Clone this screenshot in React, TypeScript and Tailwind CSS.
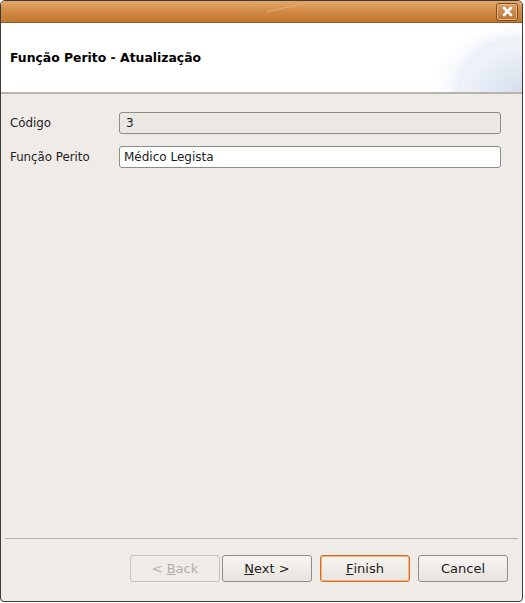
import React from "react";

const font = { fontFamily: '"DejaVu Sans", "Liberation Sans", sans-serif' };

function Btn({ children, disabled, focused }: { children: React.ReactNode; disabled?: boolean; focused?: boolean }) {
  return (
    <div
      className={
        "w-[90px] h-[27px] flex items-center justify-center rounded-[3px] border text-[13px] " +
        (disabled
          ? "border-[#c7c2bc] bg-[#efebe7] text-[#b3afa9]"
          : focused
          ? "border-[#d86b25] bg-gradient-to-b from-[#f6f4f2] to-[#e8e4df] text-[#1c1c1c] shadow-[inset_0_0_0_1px_#f3b27c]"
          : "border-[#8f8b86] bg-gradient-to-b from-[#f6f4f2] to-[#e8e4df] text-[#1c1c1c]")
      }
    >
      {children}
    </div>
  );
}

export default function App() {
  return (
    <div className="w-[525px] h-[603px] bg-white" style={font}>
      <div className="w-[523px] h-[602px] flex flex-col border border-[#3e3a35] rounded-t-[5px] rounded-b-[4px] overflow-hidden bg-[#efebe7]">
        {/* Title bar */}
        <div className="h-[22px] shrink-0 relative flex items-center justify-end pr-[4px] bg-gradient-to-b from-[#e3a868] via-[#d08a45] to-[#c2782f] border-b border-[#8a5a28]">
          <div className="absolute left-[265px] top-[6px] w-[40px] h-[1px] bg-[#e8b983] -rotate-[12deg] opacity-70" />
          <div className="w-[22px] h-[18px] rounded-[3px] border border-[#7a4c1e] bg-gradient-to-b from-[#dca066] to-[#b87232] flex items-center justify-center shadow-[inset_0_0_0_1px_#e9b883]">
            <svg width="11" height="11" viewBox="0 0 11 11">
              <path d="M2 2 L9 9 M9 2 L2 9" stroke="#ffffff" strokeWidth="2.6" strokeLinecap="round" />
            </svg>
          </div>
        </div>
        {/* Header */}
        <div className="h-[71px] shrink-0 relative bg-white border-b-2 border-[#b7b3ae] flex items-center pl-[9px] pt-[2px] overflow-hidden">
          <div className="absolute right-0 top-0 w-[110px] h-full bg-[radial-gradient(ellipse_90px_70px_at_100%_100%,#d5dfec_0%,#e6ecf5_45%,rgba(255,255,255,0)_100%)]" />
          <div className="absolute right-[-50px] top-[10px] w-[120px] h-[120px] rounded-full bg-[radial-gradient(circle,rgba(255,255,255,0)_55%,rgba(230,236,245,0.5)_62%,rgba(255,255,255,0)_72%)]" />
          <span className="relative text-[12.4px] font-bold text-black">Função Perito - Atualização</span>
        </div>
        {/* Body */}
        <div className="flex-1 flex flex-col pt-[18px] px-[9px] gap-[12px] text-[11.8px] text-[#1c1c1c]">
          <div className="flex items-center">
            <span className="w-[109px] pt-[2px]">Código</span>
            <div className="w-[382px] h-[22px] rounded-[3px] border border-[#8e8a85] bg-[#ebe7e3] flex items-center px-[6px] text-[12px]">3</div>
          </div>
          <div className="flex items-center">
            <span className="w-[109px] pt-[2px]">Função Perito</span>
            <div className="w-[382px] h-[22px] rounded-[3px] border border-[#8e8a85] bg-white flex items-center px-[4px] text-[12px]">Médico Legista</div>
          </div>
        </div>
        {/* Footer */}
        <div className="shrink-0 mx-[4px] border-t border-[#b2aea9]" />
        <div className="shrink-0 h-[62px] flex items-start pt-[16px] pl-[129px]">
          <div className="flex">
            <Btn disabled>&lt; <span className="underline ml-[4px]">B</span>ack</Btn>
            <div className="ml-[2px]"><Btn><span className="underline">N</span>ext &gt;</Btn></div>
            <div className="ml-[8px]"><Btn focused><span className="underline">F</span>inish</Btn></div>
            <div className="ml-[8px]"><Btn>Cancel</Btn></div>
          </div>
        </div>
      </div>
    </div>
  );
}
